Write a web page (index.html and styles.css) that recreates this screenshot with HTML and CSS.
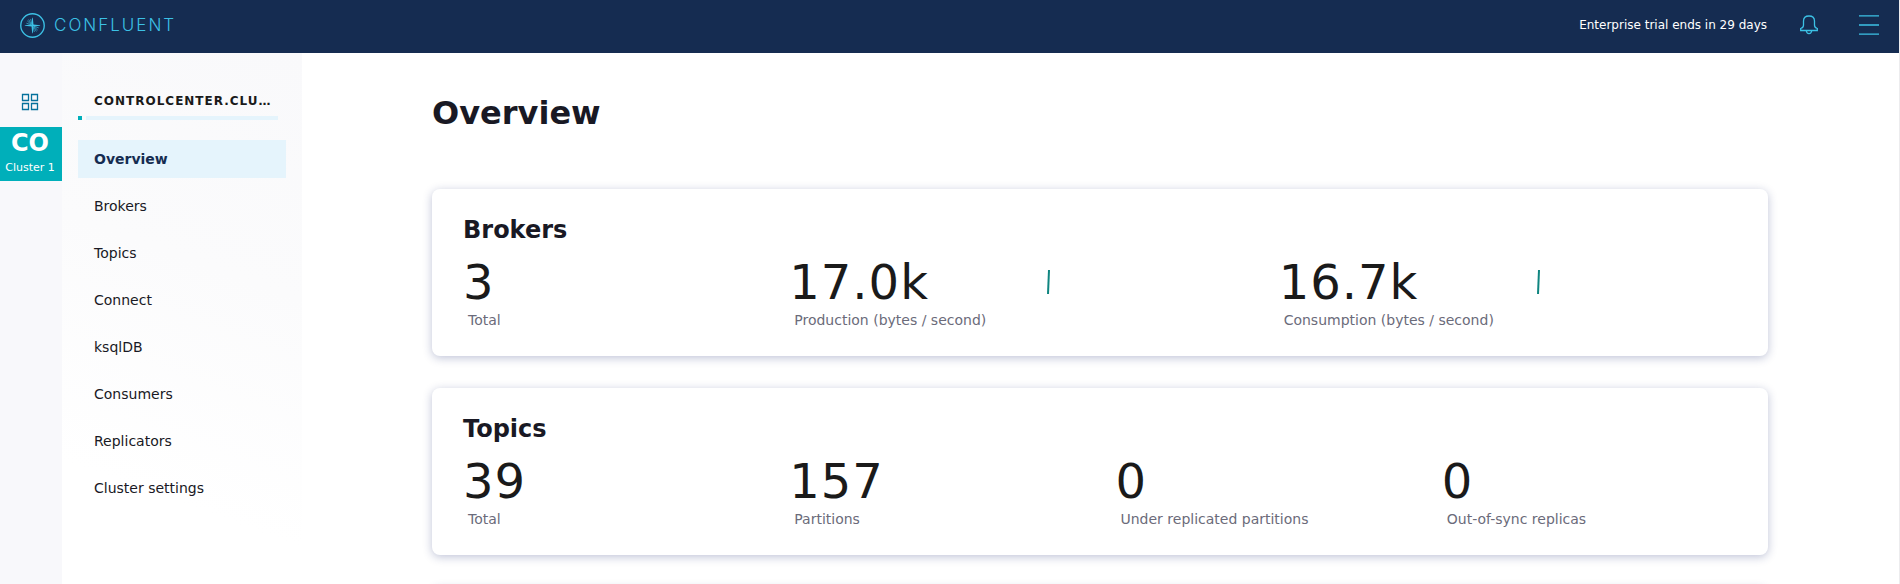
FILE: index.html
```html
<!DOCTYPE html>
<html lang="en">
<head>
<meta charset="utf-8">
<title>Overview - Control Center</title>
<link rel="stylesheet" href="styles.css">
</head>
<body>
<header class="topbar">
  <a class="brand" href="#" aria-label="Confluent">
    <svg class="brand-mark" viewBox="0 0 26 26" aria-hidden="true">
      <circle cx="13" cy="13" r="12.2" fill="none" stroke="currentColor" stroke-width="1.4"/>
      <path fill="currentColor" d="M12.700 5h.6l.7 7 6.900.7v.6l-7 .7-.6 7h-.6l-.7-7-7-.7v-.6l7-.7z"/>
      <path fill="none" stroke="currentColor" stroke-width=".7" d="M11.500 12.200L6.600 10.600M11.500 11.800L7.600 8.200M11.700 11.500L9 6.800M12.300 11.500L11.100 6.200M14.500 13.800l4.900 1.600M14.500 14.200l3.900 3.600M14.300 14.500l2.700 4.700M13.700 14.500l1.200 5.300"/>
    </svg>
    <span class="brand-name">CONFLUENT</span>
  </a>
  <span class="trial">Enterprise trial ends in 29 days</span>
  <button class="icon-button" type="button" aria-label="Notifications">
    <svg class="bell" viewBox="0 0 18 20" fill="none" stroke="currentColor" stroke-width="1.3" aria-hidden="true">
      <path d="M.7 15.500v-2c2-.6 2.800-1.400 2.800-3.200V6C3.500 2.800 5.200 1 9 1s5.500 1.800 5.500 5v4.300c0 1.800.8 2.600 2.800 3.200v2z"/>
      <path d="M6.300 15.500c.2 2 1.200 3.100 2.700 3.100s2.500-1.100 2.700-3.100"/>
    </svg>
  </button>
  <button class="icon-button" type="button" aria-label="Menu">
    <svg class="burger" viewBox="0 0 20 20" fill="none" stroke="currentColor" stroke-width="1.4" aria-hidden="true">
      <path d="M0 .9h20M0 10h20M0 19.100h20"/>
    </svg>
  </button>
</header>
<div class="layout">
  <nav class="rail" aria-label="Clusters">
    <a class="rail-home" href="#" aria-label="All clusters">
      <svg class="grid-icon" viewBox="0 0 18 18" fill="none" stroke="currentColor" stroke-width="1.3" aria-hidden="true">
        <path d="M1.500 1.500h6v6h-6zM10.500 1.500h6v6h-6zM1.500 10.500h6v6h-6zM10.500 10.500h6v6h-6z"/>
      </svg>
    </a>
    <a class="cluster" href="#">
      <span class="cluster-code">CO</span>
      <span class="cluster-name">Cluster 1</span>
    </a>
  </nav>
  <aside class="sidebar">
    <h2 class="sidebar-title">CONTROLCENTER.CLU…</h2>
    <div class="meter"><span class="meter-used"></span><span class="meter-rest"></span></div>
    <nav class="menu" aria-label="Cluster">
      <a class="menu-item active" href="#" aria-current="page">Overview</a>
      <a class="menu-item" href="#">Brokers</a>
      <a class="menu-item" href="#">Topics</a>
      <a class="menu-item" href="#">Connect</a>
      <a class="menu-item" href="#">ksqlDB</a>
      <a class="menu-item" href="#">Consumers</a>
      <a class="menu-item" href="#">Replicators</a>
      <a class="menu-item" href="#">Cluster settings</a>
    </nav>
  </aside>
  <main class="content">
    <h1 class="page-title">Overview</h1>
    <section class="card">
      <h3 class="card-title">Brokers</h3>
      <div class="stats">
        <div class="stat">
          <div class="value">3</div>
          <div class="label">Total</div>
        </div>
        <div class="stat wide">
          <div>
            <div class="value">17.0k</div>
            <div class="label">Production (bytes / second)</div>
          </div>
          <svg class="spark" viewBox="0 0 6 24" aria-hidden="true"><path d="M1 24L2 0"/></svg>
        </div>
        <div class="stat wide">
          <div>
            <div class="value">16.7k</div>
            <div class="label">Consumption (bytes / second)</div>
          </div>
          <svg class="spark" viewBox="0 0 6 24" aria-hidden="true"><path d="M1 24L2 0"/></svg>
        </div>
      </div>
    </section>
    <section class="card">
      <h3 class="card-title">Topics</h3>
      <div class="stats">
        <div class="stat">
          <div class="value">39</div>
          <div class="label">Total</div>
        </div>
        <div class="stat">
          <div class="value">157</div>
          <div class="label">Partitions</div>
        </div>
        <div class="stat">
          <div class="value">0</div>
          <div class="label">Under replicated partitions</div>
        </div>
        <div class="stat">
          <div class="value">0</div>
          <div class="label">Out-of-sync replicas</div>
        </div>
      </div>
    </section>
    <section class="card"></section>
  </main>
</div>
</body>
</html>
```
FILE: styles.css
```css
* { box-sizing: border-box; }

body {
  margin: 0;
  height: 100vh;
  display: flex;
  flex-direction: column;
  overflow: hidden;
  border-right: 1px solid #ececee;
  background: #fff;
  color: #191924;
  font-family: "DejaVu Sans", sans-serif;
  font-size: 14px;
  line-height: 20px;
}

a { color: inherit; text-decoration: none; }
h1, h2, h3 { margin: 0; }
svg { display: block; flex: none; }

.topbar {
  flex: none;
  display: flex;
  align-items: center;
  height: 53px;
  padding: 0 20px 3px 20px;
  background: #152c51;
  color: #3cc1e5;
}

.brand {
  display: flex;
  align-items: center;
  gap: 9px;
  margin-right: auto;
}
.brand-mark { width: 25px; height: 25px; }
.brand-name {
  font-family: Inter, sans-serif;
  font-size: 17px;
  font-weight: 300;
  letter-spacing: 2px;
}

.trial { margin-right: 33px; color: #fff; font-size: 12px; }

.icon-button {
  padding: 0;
  border: 0;
  background: none;
  color: inherit;
}
.icon-button + .icon-button { margin-left: 41px; }
.bell { width: 18px; height: 20px; }
.burger { width: 20px; height: 20px; }

.layout {
  flex: 1;
  min-height: 0;
  display: flex;
}

.rail {
  flex: none;
  width: 62px;
  padding-top: 40px;
  background: #f8f8fb;
}
.rail-home {
  display: block;
  padding: 0 0 16px 21px;
  color: #05719c;
}
.grid-icon { width: 18px; height: 18px; }
.cluster {
  display: flex;
  flex-direction: column;
  align-items: center;
  height: 54px;
  padding-right: 2px;
  background: #00afba;
  color: #fff;
}
.cluster-code { font-size: 24px; font-weight: 700; line-height: 32px; }
.cluster-name { font-size: 11px; line-height: 18px; }

.sidebar {
  flex: none;
  width: 240px;
  padding: 38px 16px 0;
  background: linear-gradient(200deg, #f9f9fb 0%, #fbfbfc 40%, #fff 80%);
}
.sidebar-title {
  padding-left: 16px;
  color: #1a1a1a;
  font-size: 12px;
  letter-spacing: 1px;
  white-space: nowrap;
}
.meter {
  display: flex;
  gap: 4px;
  margin: 5px 8px 20px 0;
}
.meter-used { width: 4px; height: 4px; background: #00afba; }
.meter-rest { flex: 1; height: 4px; background: #e5f4fc; }

.menu { display: flex; flex-direction: column; gap: 9px; }
.menu-item { padding: 9px 16px; }
.menu-item.active { background: #e5f4fc; color: #152c51; font-weight: 700; }

.content {
  flex: 1;
  min-width: 0;
  display: flex;
  flex-direction: column;
  padding: 40px 131px 0 130px;
  overflow: hidden;
}
.page-title { margin-bottom: 56px; font-size: 32px; line-height: 40px; }

.card {
  flex: none;
  min-height: 167px;
  margin-bottom: 32px;
  padding: 25px 0 26px 31px;
  border-radius: 8px;
  background: #fff;
  box-shadow: 0 2px 10px rgba(25, 40, 110, 0.28);
}
.card-title { margin-bottom: 8px; font-size: 24px; line-height: 32px; }

.stats { display: grid; grid-template-columns: repeat(8, 1fr); }
.stat { grid-column: span 2; }
.stat.wide {
  grid-column: span 3;
  display: grid;
  grid-template-columns: 258px 1fr;
  align-items: start;
}
.value {
  color: #1a1a1a;
  font-size: 48px;
  line-height: 56px;
  letter-spacing: 1px;
}
.label { padding-left: 5px; color: #6b6b7a; }
.spark { width: 6px; height: 24px; margin-top: 16px; }
.spark path { fill: none; stroke: #0f8580; stroke-width: 2; }
```
